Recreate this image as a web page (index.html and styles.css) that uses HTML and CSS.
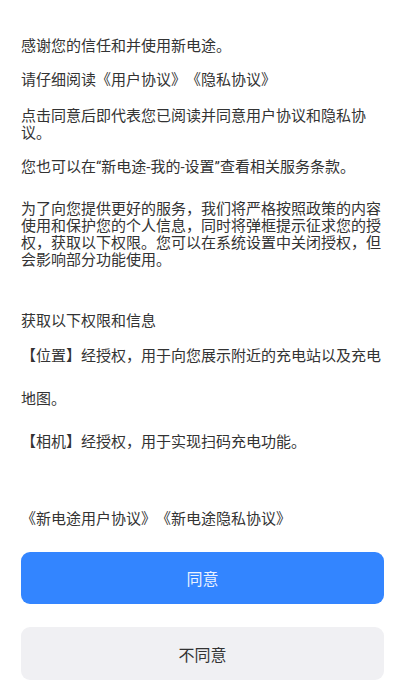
FILE: index.html
```html
<!DOCTYPE html>
<html lang="zh-CN">
<head>
<meta charset="utf-8">
<title>隐私协议</title>
<link rel="stylesheet" href="styles.css">
</head>
<body>
<main class="page">
  <p class="txt p1">感谢您的信任和并使用新电途。</p>
  <p class="txt p2">请仔细阅读《用户协议》《隐私协议》</p>
  <p class="txt p3">点击同意后即代表您已阅读并同意用户协议和隐私协议。</p>
  <p class="txt p4">您也可以在“新电途-我的-设置”查看相关服务条款。</p>
  <p class="txt p5">为了向您提供更好的服务，我们将严格按照政策的内容使用和保护您的个人信息，同时将弹框提示征求您的授权，获取以下权限。您可以在系统设置中关闭授权，但会影响部分功能使用。</p>
  <p class="txt p6">获取以下权限和信息</p>
  <p class="txt perm p7">【位置】经授权，用于向您展示附近的充电站以及充电地图。</p>
  <p class="txt perm p8">【相机】经授权，用于实现扫码充电功能。</p>
  <p class="txt links">《新电途用户协议》《新电途隐私协议》</p>
  <div class="actions">
    <button class="btn agree">同意</button>
    <button class="btn disagree">不同意</button>
  </div>
</main>
</body>
</html>
```

FILE: styles.css
```css
html, body {
  margin: 0;
  padding: 0;
  background: #ffffff;
}
.page {
  width: 405px;
  box-sizing: border-box;
  padding: 38px 21px 0 21px;
  display: flex;
  flex-direction: column;
  font-family: Roboto, "Noto Sans CJK SC", sans-serif;
  color: #333333;
  text-spacing-trim: space-all;
  font-feature-settings: "chws" 0, "halt" 0;
}
.txt {
  margin: 0;
  font-size: 15px;
  line-height: 17px;
}
.p2 { margin-top: 17px; }
.p3 { margin-top: 19px; }
.p4 { margin-top: 17px; }
.p5 { margin-top: 25px; }
.p6 { margin-top: 44px; }
.perm { line-height: 43px; }
.p7 { margin-top: 5px; }
.p8 { margin-top: 0; }
.links { margin-top: 47px; }
.actions {
  margin-top: 24px;
  display: flex;
  flex-direction: column;
  gap: 23px;
}
.btn {
  width: 100%;
  height: 52px;
  border: none;
  border-radius: 9px;
  font-family: Roboto, "Noto Sans CJK SC", sans-serif;
  font-size: 16px;
  padding: 0;
}
.agree {
  background: #3385ff;
  color: #eaf2ff;
}
.disagree {
  background: #f0f0f3;
  color: #333333;
  height: 53px;
}
```
